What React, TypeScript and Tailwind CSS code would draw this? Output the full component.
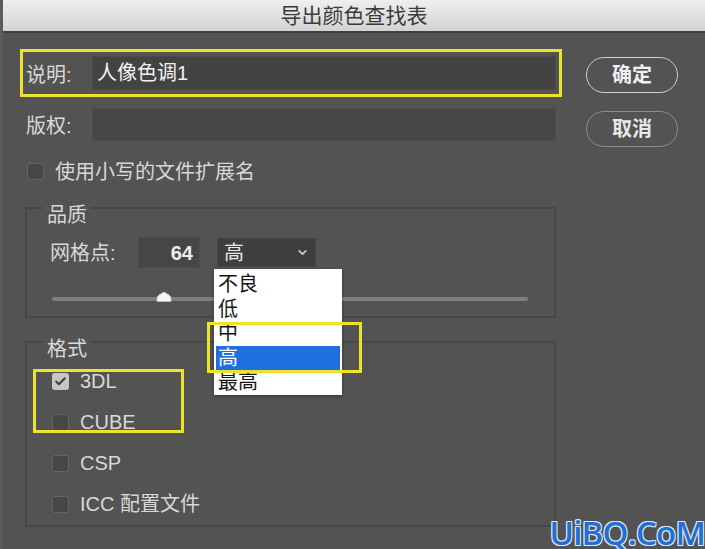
import { Check, ChevronDown } from "lucide-react";

function CheckBox({ checked }: { checked?: boolean }) {
  if (checked) {
    return (
      <span className="flex h-[17px] w-[17px] shrink-0 items-center justify-center rounded-[3px] bg-[#c6c6c6]">
        <Check size={13} strokeWidth={3.5} className="text-[#3a3a3a]" />
      </span>
    );
  }
  return <span className="h-[17px] w-[17px] shrink-0 rounded-[3px] border border-[#646464] bg-[#474747]" />;
}

// options of the 网格点 select
const quality = ["不良", "低", "中", "高", "最高"];

export default function App() {
  return (
    <div className="relative h-[549px] w-[705px] overflow-hidden border-l-[3px] border-[#5b5b5b] bg-[#535353] font-['Liberation_Sans','Noto_Sans_CJK_SC',sans-serif] text-[20px] text-[#d8d8d8]">
      {/* title bar */}
      <div className="flex h-[33px] items-center justify-center border-b-2 border-[#3f3f3f] bg-linear-to-b from-[#efefef] to-[#d3d3d3] text-[21px] text-[#3b3b3b]">
        导出颜色查找表
      </div>

      <div className="flex">
        <div className="flex w-[583px] flex-col">
          {/* 说明 */}
          <div className="mt-[16px] ml-[17px] flex h-[48px] w-[542px] items-center border-[3px] border-[#ece32c] pl-[3px]">
            <span className="w-[66px] pt-[4px]">说明:</span>
            <div className="flex h-[34px] w-[464px] items-center border border-[#4a4a4a] bg-[#434343] pl-[4px] text-[#f2f2f2]">
              人像色调1
            </div>
          </div>

          {/* 版权 */}
          <div className="mt-[11px] ml-[23px] flex h-[33px] items-center">
            <span className="w-[66px] pt-[2px]">版权:</span>
            <div className="h-[33px] w-[464px] border border-[#4d4d4d] bg-[#464646]" />
          </div>

          <div className="mt-[22px] ml-[24px] flex h-[17px] items-center gap-[11px]">
            <CheckBox />
            <span>使用小写的文件扩展名</span>
          </div>

          {/* 品质 */}
          <div className="mt-[27px] ml-[22px] h-[111px] w-[531px] border-2 border-[#474747]">
            <div className="-mt-[4px] ml-[16px] w-fit bg-[#535353] px-[4px] leading-[20px]">品质</div>
            <div className="mt-[12px] ml-[23px] flex h-[31px] items-center">
              <span className="w-[88px]">网格点:</span>
              <div className="flex h-[31px] w-[62px] items-center justify-end border border-[#4c4c4c] bg-[#464646] pr-[6px] font-bold text-[#ececec]">
                64
              </div>
              <div className="relative ml-[17px] flex h-[29px] w-[99px] items-center border border-[#454545] bg-[#3e3e3e] pl-[6px] text-[#e6e6e6]">
                <span>高</span>
                <ChevronDown size={13} strokeWidth={3} className="mr-[6px] ml-auto text-[#cfcfcf]" />

                {/* open dropdown */}
                <div className="absolute top-[30px] left-[-4px] z-10 w-[128px] bg-white pt-[3px] text-[#151515] shadow-[0_1px_3px_rgba(0,0,0,0.4)]">
                  {quality.map((q) => (
                    <div
                      key={q}
                      className={
                        q === "高"
                          ? "mx-[2px] h-[24.5px] bg-[#1f6fe0] pl-[2px] leading-[24.5px] text-white"
                          : "h-[24.5px] pl-[4px] leading-[24.5px]"
                      }
                    >
                      {q}
                    </div>
                  ))}
                  <div className="absolute top-[53px] left-[-7px] z-20 h-[51px] w-[155px] border-[3px] border-[#ece32c]" />
                </div>
              </div>
            </div>
            <div className="mt-[23px] ml-[25px] flex h-[10px] w-[476px] items-end">
              <div className="relative h-[4px] w-full rounded-full bg-[#7e7e7e]">
                <svg width="16" height="11" viewBox="0 0 16 11" className="absolute bottom-[-1px] left-[104px]">
                  <path d="M1 10.5 V7 Q1 5 3 4 L8 1 L13 4 Q15 5 15 7 V10.5 Z" fill="#f4f4f4" stroke="#bdbdbd" strokeWidth="0.8" />
                </svg>
              </div>
            </div>
          </div>

          {/* 格式 */}
          <div className="relative mt-[23px] ml-[22px] h-[186px] w-[531px] border-2 border-[#474747]">
            <div className="-mt-[4px] ml-[16px] w-fit bg-[#535353] px-[4px] leading-[20px]">格式</div>
            <div className="mt-[12px] ml-[25px] flex flex-col gap-[21px]">
              <div className="flex h-[20px] items-center gap-[11px]">
                <CheckBox checked />
                <span>3DL</span>
              </div>
              <div className="flex h-[20px] items-center gap-[11px]">
                <CheckBox />
                <span>CUBE</span>
              </div>
              <div className="flex h-[20px] items-center gap-[11px]">
                <CheckBox />
                <span>CSP</span>
              </div>
              <div className="flex h-[20px] items-center gap-[11px]">
                <CheckBox />
                <span>ICC 配置文件</span>
              </div>
            </div>
            <div className="absolute top-[26px] left-[6px] h-[64px] w-[151px] border-[3px] border-[#ece32c]" />
          </div>
        </div>

        <div className="flex flex-col gap-[18px] pt-[24px]">
          <button className="h-[36px] w-[92px] rounded-full border-[1.5px] border-[#d0d0d0] font-bold text-[#f0f0f0]">
            确定
          </button>
          <button className="h-[36px] w-[92px] rounded-full border-[1.5px] border-[#8c8c8c] font-bold text-[#e8e8e8]">
            取消
          </button>
        </div>
      </div>

      <div className="absolute right-[0px] bottom-[0px] font-['Open_Sans',sans-serif] text-[33px] leading-[33px] font-semibold tracking-[-0.8px] text-[#1f6fd6] [text-shadow:1px_1px_0_#dce8f7,-1px_-1px_0_#dce8f7,1px_-1px_0_#dce8f7,-1px_1px_0_#dce8f7]">
        UiBQ.CoM
      </div>
    </div>
  );
}
